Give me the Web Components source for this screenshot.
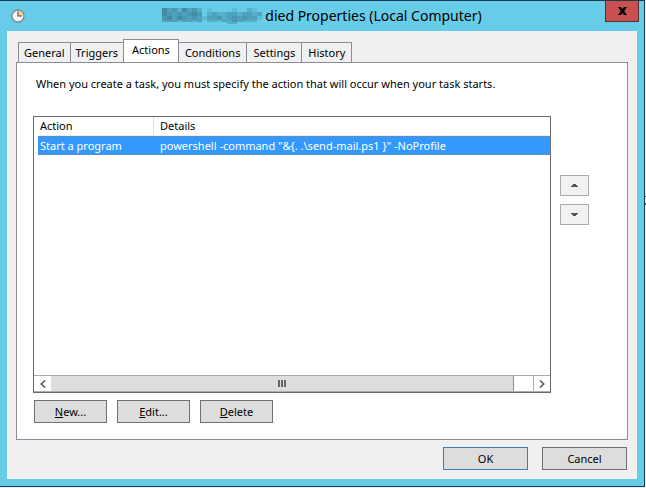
<!DOCTYPE html>
<html lang="en">
<head>
<meta charset="utf-8">
<title>Properties (Local Computer)</title>
<style>
html,body{height:100%}
body{margin:0;box-sizing:border-box;padding:0 1px 1px 0;background:linear-gradient(#555,#555) 100% 196px/1px 1px no-repeat,linear-gradient(#555,#555) 100% 203px/1px 2px no-repeat,#e9eef0;color:#000;font:11px/16px "Noto Sans","Open Sans",sans-serif;display:flex}
</style>
</head>
<body>
<task-dialog>
  <span slot="title">died Properties (Local Computer)</span>
  <tab-strip slot="tabs" labels="General,Triggers,Actions,Conditions,Settings,History" selected="2"></tab-strip>
  <actions-page></actions-page>
  <push-button slot="footer" wide primary>OK</push-button>
  <push-button slot="footer" wide>Cancel</push-button>
</task-dialog>
<script>
function define(name, markup, setup) {
  customElements.define(name, class extends HTMLElement {
    constructor() {
      super();
      this.attachShadow({mode: 'open'});
    }
    connectedCallback() {
      const t = document.createElement('template');
      t.innerHTML = markup;
      this.shadowRoot.replaceChildren(t.content.cloneNode(true));
      if (setup) setup.call(this, this.shadowRoot);
    }
  });
}

define('push-button', `
<style>
:host{display:block;width:73px;height:23px}
:host([wide]){width:85px}
button{box-sizing:border-box;width:100%;height:100%;padding:0;border:1px solid #707070;background:#ddd;color:#000;font:inherit}
:host([primary]) button{border-color:#3c7fb1}
</style>
<button type="button"><slot></slot></button>`);

define('arrow-button', `
<style>
:host{display:block;width:29px;height:21px}
button{box-sizing:border-box;display:grid;place-items:center;width:100%;height:100%;padding:0;border:1px solid #acacac;background:#f2f2f2}
svg{display:block}
:host([down]) svg{transform:scaleY(-1)}
</style>
<button type="button"><svg width="7" height="3" viewBox="0 0 7 3" shape-rendering="crispEdges"><path d="M2 0h3v1h1v1h1v1H0V2h1V1h1z" fill="#555"/></svg></button>`,
function (root) {
  root.querySelector('button').setAttribute('aria-label', this.hasAttribute('down') ? 'Move down' : 'Move up');
});

define('pixel-mosaic', `
<style>:host{display:block;width:100px;height:16px}svg{display:block}</style>
<svg width="100" height="16" viewBox="0 0 100 16" shape-rendering="crispEdges" aria-hidden="true"></svg>`,
function (root) {
  const tones = {a: '#60bdd8', b: '#57aeca', c: '#50a2bc', d: '#4997b0', e: '#438ca5'};
  const rows = [
    'ecdbecdb.a....a..ba.',
    'edcdcded.bcbbccbccbc',
    'decedcdcaccdbcdcdcca',
    'cccbccbc.bbacbdcbbb.'
  ];
  let s = '';
  rows.forEach((r, y) => [...r].forEach((c, x) => {
    if (tones[c]) s += `<rect x="${x * 5}" y="${y * 4}" width="5" height="${y === 3 ? 2 : 4}" fill="${tones[c]}"/>`;
  }));
  s += `<rect x="65" y="14" width="10" height="2" fill="${tones.b}"/>`;
  root.querySelector('svg').innerHTML = s;
});

define('tab-strip', `
<style>
:host{display:block}
div{display:flex;align-items:flex-end;padding:0 2px;margin-bottom:-1px}
button{box-sizing:border-box;height:20px;margin:0 -1px 1px 0;padding:0 5px;border:1px solid #898c95;border-bottom:0;background:#f0f0f0;color:#000;font:inherit;white-space:nowrap}
button[aria-selected=true]{height:24px;margin-bottom:0;padding:0 8px 3px;background:#fff}
button[aria-selected=true]~button{padding:0 6px}
</style>
<div role="tablist"></div>`,
function (root) {
  const list = root.querySelector('div');
  this.getAttribute('labels').split(',').forEach((label, i) => {
    const b = document.createElement('button');
    b.type = 'button';
    b.setAttribute('role', 'tab');
    b.setAttribute('aria-selected', String(i === Number(this.getAttribute('selected'))));
    b.textContent = label;
    list.append(b);
  });
});

define('scroll-bar', `
<style>
:host{display:grid;grid-template-columns:17px 1fr 19px 17px;height:17px;box-sizing:border-box;background:#fff;border-top:1px solid #acacac;border-bottom:1px solid #acacac}
button{display:grid;place-items:center;padding:0;border:0;background:#fff;min-width:0}
button:first-child{border-right:1px solid #acacac}
button:last-child{border-left:1px solid #acacac}
.thumb{display:grid;place-items:center;background:#ddd;border-right:1px solid #8e8e8e}
svg{display:block}
</style>
<button type="button" aria-label="Scroll left"><svg width="6" height="8" viewBox="0 0 6 8" fill="none" stroke="#555" stroke-width="1.5"><path d="M5 .5 1.2 4 5 7.5"/></svg></button>
<div class="thumb"><svg width="8" height="7" shape-rendering="crispEdges"><path d="M0 0h2v7H0zM3 0h2v7H3zM6 0h2v7H6z" fill="#666"/></svg></div>
<div></div>
<button type="button" aria-label="Scroll right"><svg width="6" height="8" viewBox="0 0 6 8" fill="none" stroke="#555" stroke-width="1.5"><path d="M1 .5 4.8 4 1 7.5"/></svg></button>`);

define('action-list', `
<style>
:host{display:flex;flex-direction:column;box-sizing:border-box;border:1px solid #696969;background:#fff;min-width:0}
.rows{flex:1;padding-left:4px;overflow:hidden}
table{width:100%;table-layout:fixed;border-collapse:separate;border-spacing:0}
col:first-child{width:116px}
th,td{box-sizing:border-box;height:19px;padding:0 6px;text-align:left;font-weight:400;white-space:nowrap}
th:first-child,td:first-child{padding-left:2px}
th:first-child{border-right:1px solid #dedede}
th{border-bottom:1px solid #eee}
td{background:#39f;color:#fff;border-top:1px solid #5b8fc4;border-bottom:1px solid #5b8fc4}
</style>
<div class="rows">
<table>
<colgroup><col><col></colgroup>
<thead><tr><th scope="col">Action</th><th scope="col">Details</th></tr></thead>
<tbody><tr><td>Start a program</td><td>powershell -command "&amp;{. .\\send-mail.ps1 }" -NoProfile</td></tr></tbody>
</table>
</div>
<scroll-bar></scroll-bar>`);

define('actions-page', `
<style>
:host{display:flex;flex-direction:column;flex:1;box-sizing:border-box;padding:13px 16px 16px;border:1px solid #898c95;background:#fff}
p{margin:0 3px 24px}
.main{flex:1;display:grid;grid-template-columns:1fr 29px;gap:9px;padding-right:22px}
.order{display:flex;flex-direction:column;gap:8px;padding-top:59px}
.buttons{display:flex;gap:10px;padding:7px 1px 0}
</style>
<p>When you create a task, you must specify the action that will occur when your task starts.</p>
<div class="main">
  <action-list></action-list>
  <div class="order"><arrow-button></arrow-button><arrow-button down></arrow-button></div>
</div>
<div class="buttons">
  <push-button><u>N</u>ew...</push-button><push-button><u>E</u>dit...</push-button><push-button><u>D</u>elete</push-button>
</div>`);

define('task-dialog', `
<style>
:host{flex:1;display:flex;flex-direction:column;box-sizing:border-box;min-width:0;padding:0 7px 7px;border:solid #1f3a4a;border-width:1px 1px 1px 0;background:#66cce8}
header{display:grid;grid-template-columns:40px 1fr 40px;height:30px}
.icon{margin:8px 0 0 4px}
h1{display:flex;justify-content:center;align-items:center;gap:3px;margin:0;font-size:14px;line-height:20px;font-weight:400;white-space:nowrap}
.close{justify-self:end;box-sizing:border-box;display:grid;place-items:center;width:34px;height:21px;margin-right:-2px;padding:0;border:1px solid #57302f;border-top:0;background:#c75050}
main{flex:1;display:flex;flex-direction:column;box-sizing:border-box;padding:8px 9px 9px;background:#f0f0f0}
footer{display:flex;justify-content:flex-end;gap:14px;padding:7px 1px 0 0}
</style>
<header>
  <svg class="icon" width="14" height="14" viewBox="0 0 14 14" aria-hidden="true"><circle cx="7" cy="7" r="6" fill="#f2f4f3" stroke="#858889" stroke-width="1.3"/><path d="M7 7V2a5 5 0 0 1 5 5z" fill="#f4d58a"/><path d="M7 2.5V7h4" fill="none" stroke="#555" stroke-width="1.2"/></svg>
  <h1><pixel-mosaic></pixel-mosaic><slot name="title"></slot></h1>
  <button class="close" type="button" aria-label="Close"><svg width="9" height="8" viewBox="0 0 9 8"><path d="M0 0h3l1.5 2L6 0h3L6.2 4 9 8H6L4.5 6 3 8H0l2.8-4z" fill="#000"/></svg></button>
</header>
<main><slot name="tabs"></slot><slot></slot><footer><slot name="footer"></slot></footer></main>`);
</script>
</body>
</html>
